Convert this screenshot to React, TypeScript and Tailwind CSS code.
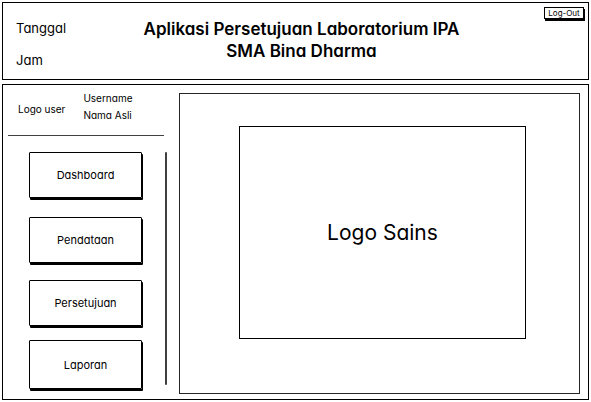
const menu = [
  { label: "Dashboard", box: "h-[46px]" },
  { label: "Pendataan", box: "mt-[19px] h-[46px]" },
  { label: "Persetujuan", box: "mt-[17px] h-[46px]" },
  { label: "Laporan", box: "mt-[14px] h-[49px]" },
];

function Header() {
  return (
    <header className="grid h-[78px] shrink-0 grid-cols-[128px_1fr_120px] border border-black">
      <div className="flex flex-col gap-3 pt-[15px] pl-[13px] text-[13px] leading-5">
        <p>Tanggal</p>
        <p>Jam</p>
      </div>
      <h1 className="pt-[15px] pl-1 text-center text-[17px] leading-[22px] font-semibold whitespace-nowrap">
        Aplikasi Persetujuan Laboratorium IPA
        <br />
        SMA Bina Dharma
      </h1>
      <div className="flex items-start justify-end pt-1 pr-1">
        <button
          type="button"
          className="h-3 w-10 border border-black text-[8px] leading-[10px] whitespace-nowrap shadow-[1px_2px_0_black]"
        >
          Log-Out
        </button>
      </div>
    </header>
  );
}

function Sidebar() {
  return (
    <aside className="flex w-[176px] shrink-0 flex-col">
      <div className="flex h-[50px] items-center gap-[18px] pb-[6px] pl-[15px] text-[10px] leading-[17px]">
        <p className="pt-1 whitespace-nowrap">Logo user</p>
        <div className="whitespace-nowrap">
          <p>Username</p>
          <p>Nama Asli</p>
        </div>
      </div>
      <hr className="mr-[15px] ml-[5px] border-[#404040]" />
      <div className="mt-4 mr-3 mb-[10px] flex flex-1">
        <nav className="flex flex-1 flex-col pr-[23px] pl-[26px]">
          {menu.map((item) => (
            <button
              key={item.label}
              type="button"
              className={`${item.box} w-full shrink-0 rounded-[1px] border border-black text-[11px] leading-4 shadow-[1px_2px_0_black]`}
            >
              {item.label}
            </button>
          ))}
        </nav>
        <div className="mb-1 rounded-full border-r-2 border-[#404040]" />
      </div>
    </aside>
  );
}

export default function App() {
  return (
    <div className="flex min-h-screen flex-col gap-1 bg-white p-[2px] font-['Inter',sans-serif] text-black [font-feature-settings:'cv11']">
      <Header />
      <div className="flex flex-1 border border-black">
        <Sidebar />
        <main className="mt-2 mr-2 mb-[5px] flex flex-1 border border-neutral-800 pt-8 pr-[53px] pb-[54px] pl-[59px]">
          <div className="flex flex-1 items-center justify-center border border-black text-[21px] leading-7">
            Logo Sains
          </div>
        </main>
      </div>
    </div>
  );
}
